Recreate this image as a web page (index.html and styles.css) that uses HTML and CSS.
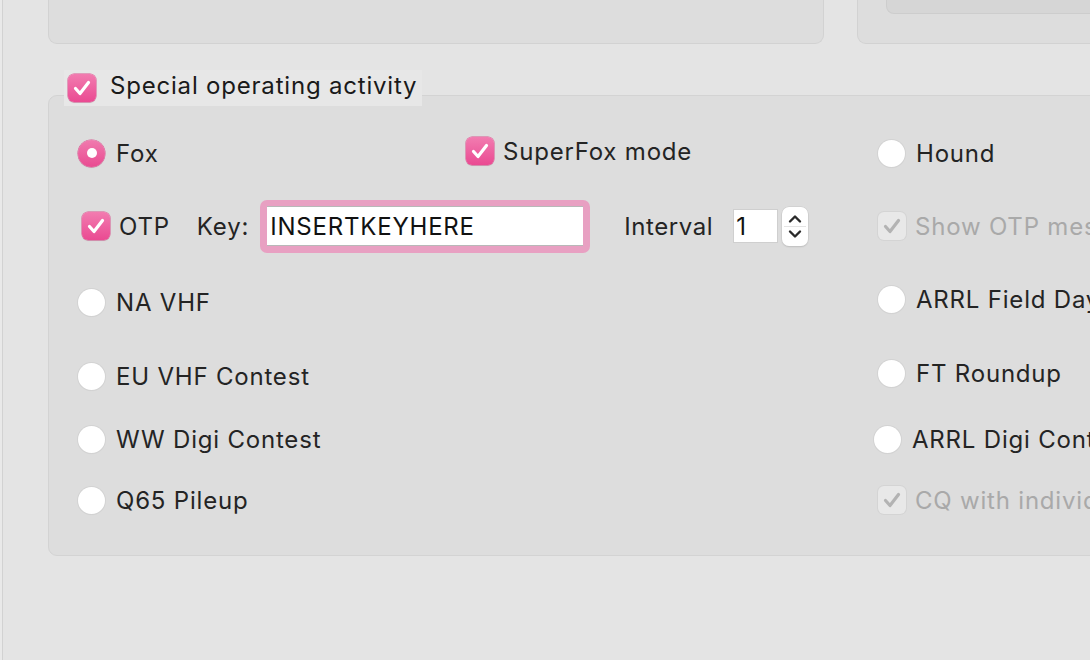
FILE: index.html
```html
<!DOCTYPE html>
<html>
<head>
<meta charset="utf-8">
<link rel="stylesheet" href="styles.css">
</head>
<body>
<div class="window">
  <div class="content">
    <div class="top-row">
      <div class="top-box left"></div>
      <div class="top-box right"><div class="inner-box"></div></div>
    </div>

    <div class="legend">
      <span class="check on"><svg viewBox="0 0 28 28"><path d="M7.5 14.5 L12 19.5 L20.5 8.5" /></svg></span>
      <span class="legend-text">Special operating activity</span>
    </div>

    <div class="group">
      <div class="cell c1 r1"><span class="radio on"></span><span class="lbl">Fox</span></div>
      <div class="cell c2 r1 up1 chk"><span class="check on"><svg viewBox="0 0 28 28"><path d="M7.5 14.5 L12 19.5 L20.5 8.5" /></svg></span><span class="lbl">SuperFox mode</span></div>
      <div class="cell c3 r1"><span class="radio"></span><span class="lbl">Hound</span></div>

      <div class="cell otp r2">
        <span class="check on"><svg viewBox="0 0 28 28"><path d="M7.5 14.5 L12 19.5 L20.5 8.5" /></svg></span>
        <span class="lbl">OTP</span>
        <span class="lbl key-lbl">Key:</span>
        <span class="key-ring"><span class="key-field">INSERTKEYHERE</span></span>
        <span class="lbl interval-lbl">Interval</span>
        <span class="spin-field">1</span>
        <span class="stepper">
          <svg viewBox="0 0 26 39">
            <path d="M8 14.5 L13 9.5 L18 14.5" />
            <path d="M8 24.5 L13 29.5 L18 24.5" />
            <line x1="2" y1="19.5" x2="24" y2="19.5" class="sep" />
          </svg>
        </span>
      </div>
      <div class="cell c3 r2 chk"><span class="check off"><svg viewBox="0 0 28 28"><path d="M7.5 14.5 L12 19.5 L20.5 8.5" /></svg></span><span class="lbl dim">Show OTP messages</span></div>

      <div class="cell c1 r3"><span class="radio"></span><span class="lbl">NA VHF</span></div>
      <div class="cell c3 r3 up2"><span class="radio"></span><span class="lbl">ARRL Field Day</span></div>

      <div class="cell c1 r4"><span class="radio"></span><span class="lbl">EU VHF Contest</span></div>
      <div class="cell c3 r4 up2"><span class="radio"></span><span class="lbl">FT Roundup</span></div>

      <div class="cell c1 r5"><span class="radio"></span><span class="lbl">WW Digi Contest</span></div>
      <div class="cell c3 r5 shift-left"><span class="radio"></span><span class="lbl">ARRL Digi Contest</span></div>

      <div class="cell c1 r6"><span class="radio"></span><span class="lbl">Q65 Pileup</span></div>
      <div class="cell c3 r6 chk"><span class="check off"><svg viewBox="0 0 28 28"><path d="M7.5 14.5 L12 19.5 L20.5 8.5" /></svg></span><span class="lbl dim">CQ with individual</span></div>
    </div>
  </div>
</div>
</body>
</html>
```

FILE: styles.css
```css
* { box-sizing: border-box; }

html, body {
  margin: 0;
  padding: 0;
  width: 1090px;
  height: 660px;
  overflow: hidden;
  background: #e4e4e4;
  font-family: "Inter", "Liberation Sans", sans-serif;
  color: #242424;
}

.window {
  height: 660px;
  border-left: 2px solid #e9e9e9;
  position: relative;
}

.window::before {
  content: "";
  display: block;
  position: absolute;
  left: 0;
  top: 0;
  bottom: 0;
  width: 1px;
  background: #d2d2d2;
}

.content {
  padding-left: 46px;
}

.top-row {
  display: flex;
  gap: 33px;
  height: 44px;
}

.top-box {
  height: 44px;
  background: #dddddd;
  border: 1px solid #d2d2d2;
  border-top: none;
  border-radius: 0 0 9px 9px;
}

.top-box.left { width: 776px; }

.top-box.right {
  flex: 1;
  margin-right: -40px;
  padding-left: 28px;
}

.inner-box {
  height: 14px;
  background: #d6d6d6;
  border: 1px solid #cdcdcd;
  border-top: none;
  border-radius: 0 0 8px 8px;
}

.legend {
  position: relative;
  z-index: 1;
  margin-top: 26px;
  margin-left: 16px;
  width: 358px;
  height: 36px;
  margin-bottom: -11px;
  background: #e7e7e7;
  display: flex;
  align-items: center;
  padding-left: 4px;
  gap: 14px;
}

.legend-text {
  font-size: 24px;
  color: #1a1a1a;
  letter-spacing: 0.8px;
  margin-bottom: 6px;
}

.group {
  width: 1100px;
  height: 461px;
  background: #dddddd;
  border: 1px solid #d3d3d3;
  border-radius: 9px;
  display: grid;
  grid-template-columns: 388px 412px 1fr;
  grid-template-rows: 73px 76px 74px 63px 61px 34px;
  padding-top: 40px;
  padding-left: 29px;
}

.cell {
  height: 34px;
  display: flex;
  align-items: center;
  gap: 11px;
  white-space: nowrap;
}

.cell.chk { gap: 9px; }

.c1 { grid-column: 1; }
.c2 { grid-column: 2; }
.c3 { grid-column: 3; }
.otp { grid-column: 1 / 3; margin-left: 4px; gap: 9px; }
.r1 { grid-row: 1; }
.r2 { grid-row: 2; }
.r3 { grid-row: 3; }
.r4 { grid-row: 4; }
.r5 { grid-row: 5; }
.r6 { grid-row: 6; }
.up1 { margin-top: -2px; }
.up2 { margin-top: -3px; }
.shift-left { margin-left: -4px; }

.lbl {
  font-size: 24px;
  color: #242424;
  letter-spacing: 0.8px;
}

.lbl.dim { color: #a9a9a9; }

.radio {
  width: 27px;
  height: 27px;
  flex: none;
  border-radius: 50%;
  background: #ffffff;
  box-shadow: 0 0 0 1px #d3d3d3, 0 1px 1px rgba(0,0,0,0.06);
  display: flex;
  align-items: center;
  justify-content: center;
}

.radio.on {
  background: linear-gradient(#f07aae, #e94b91);
  box-shadow: 0 0 0 0.5px #d9558f, 0 1px 1px rgba(0,0,0,0.1);
}

.radio.on::after {
  content: "";
  width: 10px;
  height: 10px;
  border-radius: 50%;
  background: #ffffff;
}

.check {
  width: 28px;
  height: 28px;
  flex: none;
  border-radius: 6px;
  display: flex;
}

.check svg {
  width: 28px;
  height: 28px;
}

.check path {
  fill: none;
  stroke-width: 3.2;
  stroke-linecap: round;
  stroke-linejoin: round;
}

.check.on {
  background: linear-gradient(#f27cb0, #ea4a92);
  box-shadow: 0 0 0 0.5px #d9558f, 0 1px 1px rgba(0,0,0,0.1);
}

.check.on path { stroke: #ffffff; }

.check.off {
  background: #e8e8e8;
  box-shadow: 0 0 0 1px #d4d4d4;
}

.check.off path { stroke: #b3b3b3; }

.key-lbl { margin-left: 18px; }

.key-ring {
  margin-left: 2px;
  width: 330px;
  height: 53px;
  border-radius: 7px;
  background: #e8a0c2;
  padding: 6px 7px 7px 7px;
  display: flex;
}

.key-field {
  flex: 1;
  background: #ffffff;
  box-shadow: inset 0 1px 0 #b8b8b8, inset 0 -1px 0 #b8b8b8;
  font-size: 24px;
  letter-spacing: 0.8px;
  color: #111;
  display: flex;
  align-items: center;
  padding-left: 3px;
  padding-top: 1px;
}

.interval-lbl { margin-left: 25px; letter-spacing: 0.6px; }

.spin-field {
  margin-left: 11px;
  width: 45px;
  height: 34px;
  background: #ffffff;
  box-shadow: inset 0 0 0 1px #cfcfcf, inset 0 1px 0 #bcbcbc;
  font-size: 24px;
  color: #111;
  padding-left: 3px;
  display: flex;
  align-items: center;
}

.stepper {
  margin-left: -5px;
  width: 26px;
  height: 39px;
  border-radius: 7px;
  background: #ffffff;
  box-shadow: 0 0 0 0.5px #c8c8c8, 0 1px 1.5px rgba(0,0,0,0.15);
  display: flex;
}

.stepper svg { width: 26px; height: 39px; }

.stepper path {
  fill: none;
  stroke: #2a2a2a;
  stroke-width: 2.4;
  stroke-linecap: round;
  stroke-linejoin: round;
}

.stepper .sep {
  stroke: #e4e4e4;
  stroke-width: 1;
}
```
